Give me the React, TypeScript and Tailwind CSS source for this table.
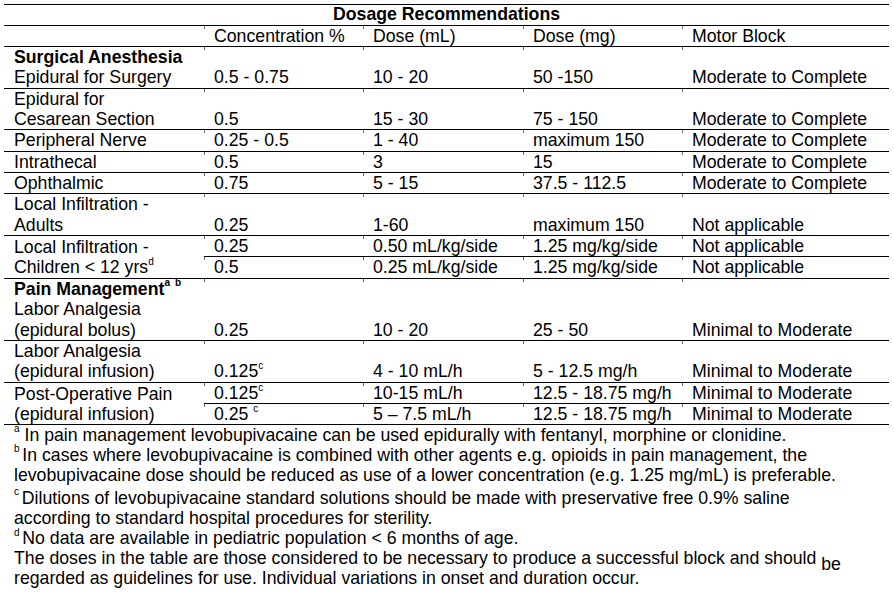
import type { ReactNode } from "react";

const cell = "relative align-bottom pl-[10px] pr-0 py-0 leading-[20.35px] whitespace-nowrap border-b border-black text-left font-normal";

function Tick() {
  return <span className="absolute left-0 top-0 w-px h-[3px] bg-[#666]" />;
}

function Sup({ children, up = 8 }: { children: ReactNode; up?: number }) {
  return (
    <sup className={up === 8 ? "text-[10px] -top-[8px]" : "text-[10px] -top-[9px]"}>{children}</sup>
  );
}

function Vals({ vals }: { vals: ReactNode[] }) {
  return (
    <>
      {vals.map((v, i) => (
        <td key={i} className={cell}>
          <Tick />
          {v}
        </td>
      ))}
    </>
  );
}

function Row({ label, vals }: { label: ReactNode[]; vals: ReactNode[] }) {
  return (
    <tr>
      <td className={cell}>
        {label.map((l, i) => (
          <div key={i}>{l}</div>
        ))}
      </td>
      <Vals vals={vals} />
    </tr>
  );
}

function SplitRow({ label, top, bottom }: { label: ReactNode[]; top: ReactNode[]; bottom: ReactNode[] }) {
  return (
    <>
      <tr>
        <td rowSpan={2} className={cell}>
          {label.map((l, i) => (
            <div key={i}>{l}</div>
          ))}
        </td>
        <Vals vals={top} />
      </tr>
      <tr>
        <Vals vals={bottom} />
      </tr>
    </>
  );
}

export default function App() {
  return (
    <div className="w-[894px] h-[602px] bg-white text-black text-[17.7px] font-['Liberation_Sans',Arial,sans-serif] overflow-hidden">
      <table className="border-collapse table-fixed w-[885px] ml-[4px] mt-[4px]">
        <colgroup>
          <col className="w-[200px]" />
          <col className="w-[159px]" />
          <col className="w-[160px]" />
          <col className="w-[159px]" />
          <col className="w-[207px]" />
        </colgroup>
        <thead>
          <tr>
            <th colSpan={5} className="border-t border-b border-black text-center font-bold leading-[19.7px] p-0">
              Dosage Recommendations
            </th>
          </tr>
          <tr>
            <th className={cell}></th>
            <Vals vals={["Concentration %", "Dose (mL)", "Dose (mg)", "Motor Block"]} />
          </tr>
        </thead>
        <tbody>
          <Row
            label={[<b key="s">Surgical Anesthesia</b>, "Epidural for Surgery"]}
            vals={["0.5 - 0.75", "10 - 20", "50 -150", "Moderate to Complete"]}
          />
          <Row
            label={["Epidural for", "Cesarean Section"]}
            vals={["0.5", "15 - 30", "75 - 150", "Moderate to Complete"]}
          />
          <Row label={["Peripheral Nerve"]} vals={["0.25 - 0.5", "1 - 40", "maximum 150", "Moderate to Complete"]} />
          <Row label={["Intrathecal"]} vals={["0.5", "3", "15", "Moderate to Complete"]} />
          <Row label={["Ophthalmic"]} vals={["0.75", "5 - 15", "37.5 - 112.5", "Moderate to Complete"]} />
          <Row
            label={["Local Infiltration -", "Adults"]}
            vals={["0.25", "1-60", "maximum 150", "Not applicable"]}
          />
          <SplitRow
            label={[
              "Local Infiltration -",
              <>
                Children &lt; 12 yrs<Sup>d</Sup>
              </>,
            ]}
            top={["0.25", "0.50 mL/kg/side", "1.25 mg/kg/side", "Not applicable"]}
            bottom={["0.5", "0.25 mL/kg/side", "1.25 mg/kg/side", "Not applicable"]}
          />
          <Row
            label={[
              <b key="p">
                Pain Management<Sup up={10}>a</Sup> <Sup up={10}>b</Sup>
              </b>,
              "Labor Analgesia",
              "(epidural bolus)",
            ]}
            vals={["0.25", "10 - 20", "25 - 50", "Minimal to Moderate"]}
          />
          <Row
            label={["Labor Analgesia", "(epidural infusion)"]}
            vals={[
              <>
                0.125<Sup>c</Sup>
              </>,
              "4 - 10 mL/h",
              "5 - 12.5 mg/h",
              "Minimal to Moderate",
            ]}
          />
          <SplitRow
            label={["Post-Operative Pain", "(epidural infusion)"]}
            top={[
              <>
                0.125<Sup>c</Sup>
              </>,
              "10-15 mL/h",
              "12.5 - 18.75 mg/h",
              "Minimal to Moderate",
            ]}
            bottom={[
              <>
                0.25 <Sup>c</Sup>
              </>,
              "5 – 7.5 mL/h",
              "12.5 - 18.75 mg/h",
              "Minimal to Moderate",
            ]}
          />
        </tbody>
      </table>

      <div className="pl-[14px] leading-[20px] whitespace-nowrap">
        <p>
          <Sup up={10}>a</Sup> In pain management levobupivacaine can be used epidurally with fentanyl, morphine or clonidine.
        </p>
        <p>
          <Sup up={10}>b </Sup>In cases where levobupivacaine is combined with other agents e.g. opioids in pain management, the
          <br />
          levobupivacaine dose should be reduced as use of a lower concentration (e.g. 1.25 mg/mL) is preferable.
        </p>
        <p className="mt-[3px]">
          <Sup up={10}>c </Sup>Dilutions of levobupivacaine standard solutions should be made with preservative free 0.9% saline
          <br />
          according to standard hospital procedures for sterility.
        </p>
        <p>
          <Sup>d </Sup>No data are available in pediatric population &lt; 6 months of age.
        </p>
        <p>
          The doses in the table are those considered to be necessary to produce a successful block and should{" "}
          <span className="relative top-[6px]">be</span>
          <br />
          regarded as guidelines for use. Individual variations in onset and duration occur.
        </p>
      </div>
    </div>
  );
}
